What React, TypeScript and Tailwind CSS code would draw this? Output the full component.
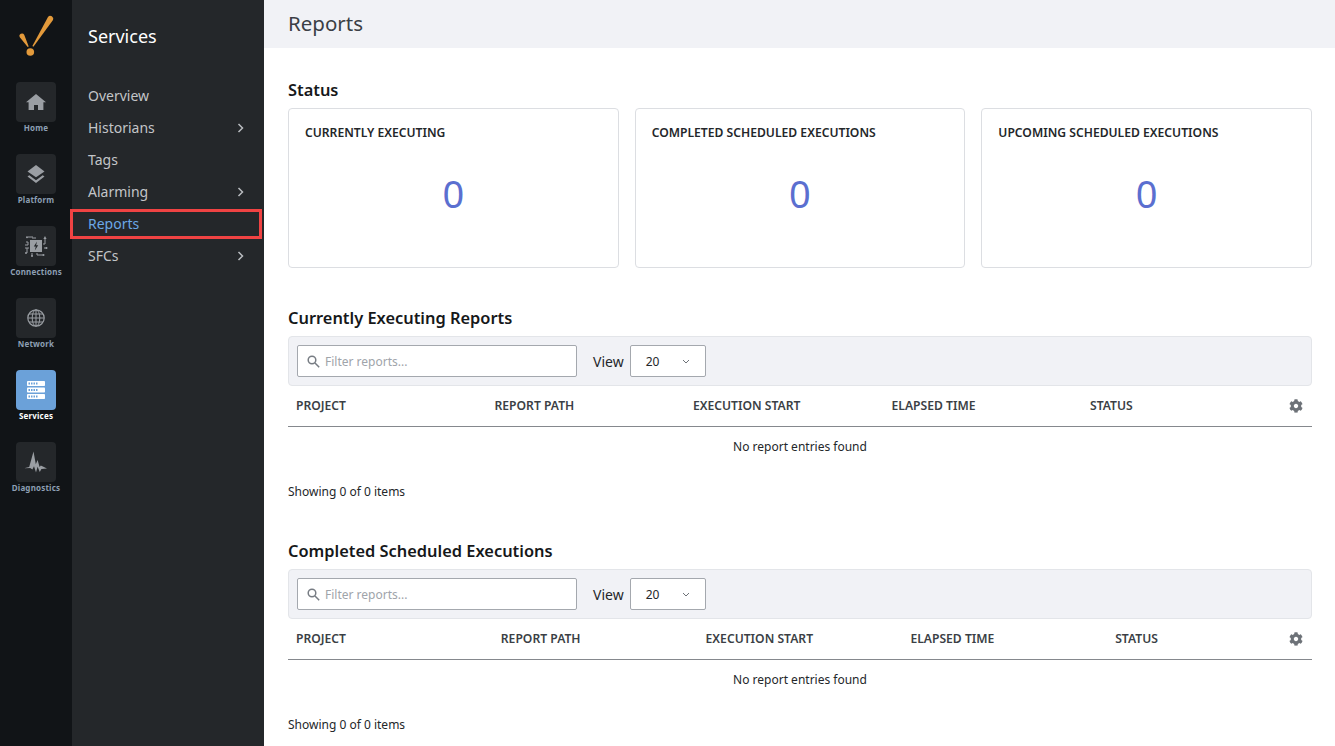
import React from "react";

const Logo = () => (
  <svg width="40" height="46" viewBox="0 0 40 46" className="block">
    <path d="M37 7.1A3 3 0 0 0 32 3.9L16.4 33l1 .7z" fill="#e39a3b" />
    <path d="M3.8 24.2A2.5 2.5 0 0 1 8.2 21.8L12.7 33.5l-1 .4z" fill="#e39a3b" />
    <circle cx="14.3" cy="39" r="3.8" fill="#e39a3b" />
  </svg>
);

const HomeIcon = () => (
  <svg width="20" height="16" viewBox="0 0 20 16" fill="#9a9ea3">
    <path d="M10 0 0 8.2h2.6V16H8v-5h4v5h5.4V8.2H20z" />
  </svg>
);
const LayersIcon = () => (
  <svg width="20" height="20" viewBox="0 0 20 20" fill="#9a9ea3">
    <path d="M10 1 1.5 7.5 10 13.2l8.5-5.7z" />
    <path d="m3.3 11.3-1.8 1.3L10 19l8.5-6.4-1.8-1.3L10 16.3z" />
  </svg>
);
const ConnIcon = () => (
  <svg width="24" height="24" viewBox="0 0 24 24" fill="none" stroke="#9a9ea3" strokeWidth="1">
    <rect x="6" y="6" width="12" height="12" fill="#9a9ea3" stroke="none" />
    <path d="M13 7.5 9.8 12.6h2l-1 3.9 3.4-5.2h-2.1z" fill="#24272a" stroke="none" />
    <path d="M4 3h5v2M11 3v2M21 5v5h-2M2 8h2v3H1M1 14h4M3 14v5M8 19v3M13 19v2h6M20 14h3" />
    <circle cx="3" cy="3.2" r="1" fill="#9a9ea3" stroke="none" />
    <circle cx="8" cy="22" r="1" fill="#9a9ea3" stroke="none" />
    <circle cx="2" cy="19" r="1" fill="#9a9ea3" stroke="none" />
    <circle cx="19.5" cy="21" r="1" fill="#9a9ea3" stroke="none" />
    <path d="m21 2-1.6 3h3.2z" fill="#9a9ea3" stroke="none" />
    <circle cx="22.5" cy="14" r="1" fill="#9a9ea3" stroke="none" />
  </svg>
);
const GlobeIcon = () => (
  <svg width="18" height="18" viewBox="0 0 18 18" fill="none" stroke="#9a9ea3" strokeWidth="1">
    <circle cx="9" cy="9" r="8.2" strokeWidth="1.2" />
    <ellipse cx="9" cy="9" rx="3.8" ry="8.2" />
    <path d="M9 1v16M1 9h16M2 5h14M2 13h14" />
  </svg>
);
const ServerIcon = () => (
  <svg width="20" height="18" viewBox="0 0 20 18">
    {[0, 6.5, 13].map((y) => (
      <g key={y}>
        <rect x="1" y={y} width="18" height="5" rx="0.8" fill="#ffffff" />
        <rect x="2.5" y={y + 1.5} width="1.5" height="2" fill="#6ba1d9" />
        <rect x="5" y={y + 1.5} width="1.5" height="2" fill="#6ba1d9" />
        <rect x="7.5" y={y + 1.5} width="1.5" height="2" fill="#6ba1d9" />
        <rect x="10" y={y + 1.5} width="1.5" height="2" fill="#6ba1d9" />
      </g>
    ))}
  </svg>
);
const PulseIcon = () => (
  <svg width="24" height="22" viewBox="0 0 24 22" fill="#9a9ea3">
    <path d="M0 17.3 5.2 16 9.5 0.5l2.3 12.7 1.8-4.2 2 7 1.2-1.5L23 17.4l-5.6.6-1.6 3-2.2-5.2-1.6 5.7-2-6.2-1.6 3.2-2.2-1.4z" />
  </svg>
);

const Chevron = () => (
  <svg width="7" height="10" viewBox="0 0 7 10" fill="none" stroke="#b9bcc0" strokeWidth="1.5">
    <path d="m1.5 1 4 4-4 4" />
  </svg>
);
const SearchIcon = () => (
  <svg width="13" height="13" viewBox="0 0 13 13" fill="none" stroke="#777c83" strokeWidth="1.5">
    <circle cx="5" cy="5" r="3.8" />
    <path d="m8 8 4.2 4.2" />
  </svg>
);
const Gear = () => (
  <svg width="14" height="14" viewBox="0 0 512 512" fill="#6d7278" className="mr-px">
    <path d="M487.4 315.7l-42.6-24.6c4.3-23.2 4.3-47 0-70.2l42.6-24.6c4.9-2.8 7.1-8.6 5.5-14-11.1-35.6-30-67.8-54.7-94.6-3.8-4.1-10-5.1-14.8-2.3L380.8 110c-17.9-15.4-38.5-27.3-60.8-35.1V25.8c0-5.6-3.9-10.5-9.4-11.7-36.7-8.2-74.3-7.8-109.2 0-5.5 1.2-9.4 6.1-9.4 11.7V75c-22.2 7.9-42.8 19.8-60.8 35.1L88.7 85.5c-4.9-2.8-11-1.9-14.8 2.3-24.7 26.7-43.6 58.9-54.7 94.6-1.7 5.4.6 11.2 5.5 14L67.3 221c-4.3 23.2-4.3 47 0 70.2l-42.6 24.6c-4.9 2.8-7.1 8.6-5.5 14 11.1 35.6 30 67.8 54.7 94.6 3.8 4.1 10 5.1 14.8 2.3l42.6-24.6c17.9 15.4 38.5 27.3 60.8 35.1v49.2c0 5.6 3.9 10.5 9.4 11.7 36.7 8.2 74.3 7.8 109.2 0 5.5-1.2 9.4-6.1 9.4-11.7v-49.2c22.2-7.9 42.8-19.8 60.8-35.1l42.6 24.6c4.9 2.8 11 1.9 14.8-2.3 24.7-26.7 43.6-58.9 54.7-94.6 1.5-5.5-.7-11.3-5.6-14.1zM256 336c-44.1 0-80-35.9-80-80s35.9-80 80-80 80 35.9 80 80-35.9 80-80 80z" />
  </svg>
);

const rail = [
  { label: "Home", icon: <HomeIcon /> },
  { label: "Platform", icon: <LayersIcon /> },
  { label: "Connections", icon: <ConnIcon /> },
  { label: "Network", icon: <GlobeIcon /> },
  { label: "Services", icon: <ServerIcon />, active: true },
  { label: "Diagnostics", icon: <PulseIcon /> },
];

const menu = [
  { label: "Overview" },
  { label: "Historians", more: true },
  { label: "Tags" },
  { label: "Alarming", more: true },
  { label: "Reports", active: true },
  { label: "SFCs", more: true },
];

const StatCard = ({ title }: { title: string }) => (
  <div className="h-40 rounded border border-[#dcdee2] bg-white pl-4 pr-4 pt-[14px]">
    <div className="text-[12.15px] leading-5 font-semibold text-[#24272a]">{title}</div>
    <div className="mt-[23px] text-center text-[38px] leading-[54px] text-[#5b6fd0]">0</div>
  </div>
);

const Table = ({
  title,
  columns,
  gridClass,
}: {
  title: string;
  columns: string[];
  gridClass: string;
}) => (
  <section>
    <h2 className="text-[16.4px] leading-[22px] font-semibold text-[#16181a]">{title}</h2>
    <div className="mt-[7px] flex h-[50px] items-center rounded border border-[#e3e5e9] bg-[#f1f2f6] pl-2">
      <div className="flex h-8 w-[280px] items-center gap-[5px] rounded-[2px] border border-[#a4a8ae] bg-white pl-[9px]">
        <SearchIcon />
        <span className="pt-px text-xs text-[#a0a4aa]">Filter reports...</span>
      </div>
      <span className="ml-4 pt-px text-sm text-[#24272a]">View</span>
      <div className="ml-[6px] flex h-8 w-[76px] items-center rounded-[2px] border border-[#a4a8ae] bg-white pr-[15px] pl-[15px]">
        <span className="flex-1 pt-px text-xs text-[#24272a]">20</span>
        <svg width="8" height="5" viewBox="0 0 8 5" fill="none" stroke="#6d7278" strokeWidth="1">
          <path d="m1 1 3 3 3-3" />
        </svg>
      </div>
    </div>
    <div className={`grid h-[41px] items-center border-b border-[#85888d] px-2 ${gridClass}`}>
      {columns.map((c, i) => (
        <div key={c} className={`text-[12.15px] font-semibold text-[#3b3f45] ${i === columns.length - 1 ? "flex items-center justify-between" : ""}`}>
          <span>{c}</span>
          {i === columns.length - 1 && <Gear />}
        </div>
      ))}
    </div>
    <div className="flex h-10 items-center justify-center text-xs text-[#24272a]">No report entries found</div>
    <div className="mt-[17px] text-xs leading-4 text-[#24272a]">Showing 0 of 0 items</div>
  </section>
);

export default function App() {
  const cols = ["PROJECT", "REPORT PATH", "EXECUTION START", "ELAPSED TIME", "STATUS"];
  return (
    <div className="flex h-[746px] w-[1335px] overflow-hidden bg-white font-['Noto_Sans',sans-serif]">
      <nav className="flex w-[72px] shrink-0 flex-col items-center bg-[#111417]">
        <div className="mt-[13px] mb-[23px] h-[46px]">
          <Logo />
        </div>
        <div className="flex flex-col items-center gap-[18px]">
          {rail.map((r) => (
            <div key={r.label} className="flex h-[54px] w-[72px] flex-col items-center">
              <div className={`flex h-10 w-10 items-center justify-center rounded ${r.active ? "bg-[#6ba1d9]" : "bg-[#24272a]"}`}>
                {r.icon}
              </div>
              <span className={`text-[8px] leading-[12px] font-bold tracking-[0.2px] ${r.active ? "text-white" : "text-[#8d9fb3]"}`}>
                {r.label}
              </span>
            </div>
          ))}
        </div>
      </nav>

      <aside className="relative w-48 shrink-0 bg-[#24272a]">
        <h1 className="mt-[23px] ml-4 text-lg leading-[26px] font-normal text-white">Services</h1>
        <ul className="mt-[31px]">
          {menu.map((m) => (
            <li
              key={m.label}
              className={`flex h-8 items-center justify-between pr-5 pl-4 text-sm ${m.active ? "text-[#6ba7e6]" : "text-[#c3c5c8]"}`}
            >
              <span>{m.label}</span>
              {m.more && <Chevron />}
            </li>
          ))}
        </ul>
        <div className="absolute top-[209px] -left-[2px] h-[30px] w-[192px] border-[3px] border-[#f04343]" />
      </aside>

      <main className="min-w-0 flex-1">
        <header className="flex h-12 items-center bg-[#f1f2f6] pb-[2px] pl-6">
          <span className="text-[20.5px] text-[#3b3f45]">Reports</span>
        </header>
        <div className="pt-[31px] pr-[23px] pl-6">
          <h2 className="text-[16.4px] leading-[22px] font-semibold text-[#16181a]">Status</h2>
          <div className="mt-[7px] grid grid-cols-3 gap-4">
            <StatCard title="CURRENTLY EXECUTING" />
            <StatCard title="COMPLETED SCHEDULED EXECUTIONS" />
            <StatCard title="UPCOMING SCHEDULED EXECUTIONS" />
          </div>
          <div className="mt-[39px]">
            <Table title="Currently Executing Reports" columns={cols} gridClass="grid-cols-[repeat(4,198.5px)_1fr]" />
          </div>
          <div className="mt-[40px]">
            <Table title="Completed Scheduled Executions" columns={cols} gridClass="grid-cols-[repeat(4,204.8px)_1fr]" />
          </div>
        </div>
      </main>
    </div>
  );
}
